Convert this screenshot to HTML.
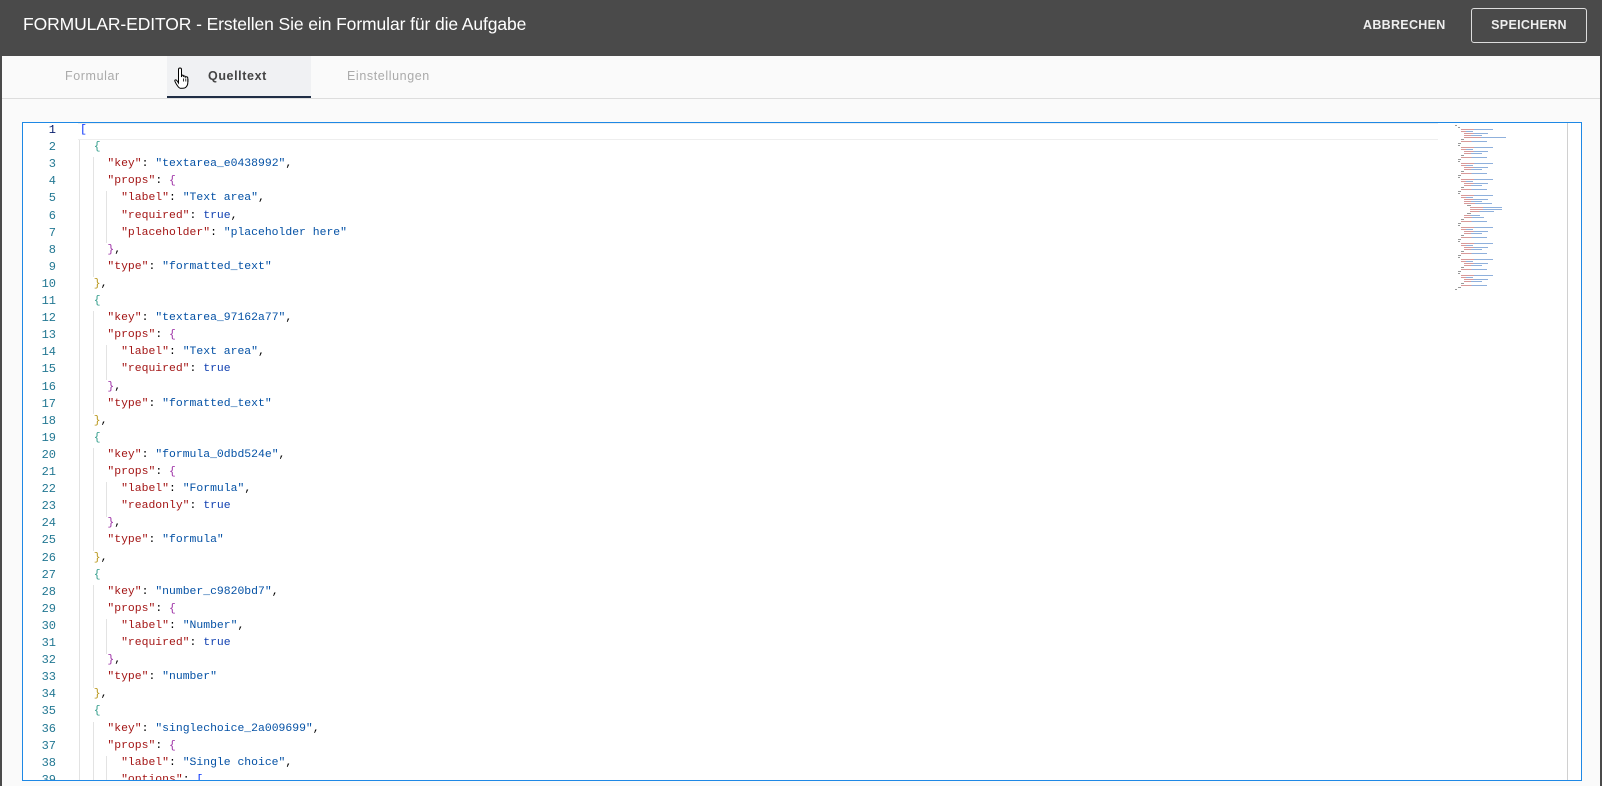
<!DOCTYPE html>
<html><head><meta charset="utf-8"><style>
*{margin:0;padding:0;box-sizing:border-box}
body{width:1602px;height:786px;overflow:hidden;background:#4a4a4a;font-family:"Liberation Sans",sans-serif;position:relative}
#dlg{position:absolute;left:2px;top:0;width:1598px;height:786px;background:#fafafa}
#hdr{position:absolute;left:0;top:0;width:1598px;height:56px;background:#4a4a4a}
#title{position:absolute;left:21px;top:14px;color:#fff;font-size:17.5px;letter-spacing:-.1px}
#abb{position:absolute;left:1361px;top:18px;color:#eee;font-size:12.5px;font-weight:bold;letter-spacing:.3px}
#sp{position:absolute;left:1469px;top:8px;width:116px;height:35px;border:1px solid #ddd;border-radius:3px;color:#eee;font-size:12.5px;font-weight:bold;text-align:center;line-height:33px;letter-spacing:.3px}
#tabs{position:absolute;left:0;top:56px;width:1598px;height:43px;border-bottom:1px solid #ddd;background:#fafafa}
.tab{position:absolute;top:0;height:42px;line-height:40px;font-size:12.5px;color:#aaa;letter-spacing:.6px}
#act{left:165px;width:144px;background:#f0f1f3;border-bottom:2px solid #1f2d44;color:#444;font-weight:bold;padding-left:41px}
#ed{position:absolute;left:20px;top:122px;width:1560px;height:659px;border:1.5px solid #1e88e5;background:#fff;overflow:hidden}
#sb{position:absolute;left:1544px;top:0;width:1px;height:100%;background:#d0d0d0}
#cur{position:absolute;left:55px;top:0;width:1360px;height:17px;border-top:1px solid #eee;border-bottom:1px solid #eee}
.ln{position:absolute;left:0;width:33px;text-align:right;font-family:"Liberation Mono",monospace;font-size:12px;color:#237893}
.cd{position:absolute;left:57px;white-space:pre;font-family:"Liberation Mono",monospace;font-size:11.42px;color:#000}
.k{color:#a31515}.s{color:#0451a5}.t{color:#0f3fb0}.b1{color:#0431fa}.b2{color:#319c8a}.b3{color:#9c2fa5}.b4{color:#b8961a}
.g{position:absolute;width:1px;background:#e3e3e3}
#mm{position:absolute;left:1432px;top:2px;width:70px}
#mm div{height:1px;margin-bottom:1px}
</style></head><body>
<div id="dlg">
<div id="hdr"><div id="title">FORMULAR-EDITOR - Erstellen Sie ein Formular für die Aufgabe</div>
<div id="abb">ABBRECHEN</div><div id="sp">SPEICHERN</div></div>
<div id="tabs">
<div class="tab" style="left:63px">Formular</div>
<div class="tab" id="act">Quelltext</div>
<div class="tab" style="left:345px">Einstellungen</div>
<svg style="position:absolute;left:172px;top:10px" width="20" height="24" viewBox="0 0 20 24"><path d="M6 2c1 0 1.5.6 1.5 1.5V11l.5-2c1 0 1.5.5 1.5 1.2l.3-.3c1 0 1.5.5 1.5 1.2.2-.2.6-.3 1-.3 1 0 1.5.7 1.5 1.5v4.5c0 3-2 5.5-5 5.5H7.5C5 22.8 3.5 20 2 17.5L.9 15.3c-.4-.8.2-1.6 1-1.4.5.1 1 .6 1.6 1.6l1 1.5V3.5C4.5 2.6 5 2 6 2z" fill="#fff" stroke="#000" stroke-width="1"/><path d="M9.5 12.5v3M11.8 12.5v3M14 13v3" stroke="#000" stroke-width=".8"/></svg>
</div>
<div id="ed">
<div id="cur"></div>
<div id="sb"></div>
<div id="code"></div>
<div id="mm"></div>
</div>
</div>
<script>
const L=[
['b1','['],
['','  ',['b2','{']],
['','    ',['k','"key"'],': ',['s','"textarea_e0438992"'],','],
['','    ',['k','"props"'],': ',['b3','{']],
['','      ',['k','"label"'],': ',['s','"Text area"'],','],
['','      ',['k','"required"'],': ',['t','true'],','],
['','      ',['k','"placeholder"'],': ',['s','"placeholder here"']],
['','    ',['b3','}'],','],
['','    ',['k','"type"'],': ',['s','"formatted_text"']],
['','  ',['b4','}'],','],
['','  ',['b2','{']],
['','    ',['k','"key"'],': ',['s','"textarea_97162a77"'],','],
['','    ',['k','"props"'],': ',['b3','{']],
['','      ',['k','"label"'],': ',['s','"Text area"'],','],
['','      ',['k','"required"'],': ',['t','true']],
['','    ',['b3','}'],','],
['','    ',['k','"type"'],': ',['s','"formatted_text"']],
['','  ',['b4','}'],','],
['','  ',['b2','{']],
['','    ',['k','"key"'],': ',['s','"formula_0dbd524e"'],','],
['','    ',['k','"props"'],': ',['b3','{']],
['','      ',['k','"label"'],': ',['s','"Formula"'],','],
['','      ',['k','"readonly"'],': ',['t','true']],
['','    ',['b3','}'],','],
['','    ',['k','"type"'],': ',['s','"formula"']],
['','  ',['b4','}'],','],
['','  ',['b2','{']],
['','    ',['k','"key"'],': ',['s','"number_c9820bd7"'],','],
['','    ',['k','"props"'],': ',['b3','{']],
['','      ',['k','"label"'],': ',['s','"Number"'],','],
['','      ',['k','"required"'],': ',['t','true']],
['','    ',['b3','}'],','],
['','    ',['k','"type"'],': ',['s','"number"']],
['','  ',['b4','}'],','],
['','  ',['b2','{']],
['','    ',['k','"key"'],': ',['s','"singlechoice_2a009699"'],','],
['','    ',['k','"props"'],': ',['b3','{']],
['','      ',['k','"label"'],': ',['s','"Single choice"'],','],
['','      ',['k','"options"'],': ',['b1','[']]
];
const LH=17.1;let h='';
const esc=s=>s.replace(/&/g,'&amp;').replace(/</g,'&lt;');
L.forEach((l,i)=>{
 const y=(i*LH).toFixed(1);
 h+=`<div class="ln" style="top:${y}px;${i==0?'color:#0b216f':''}">${i+1}</div>`;
 let c='';
 if(l[0]){c=`<span class="${l[0]}">${esc(l[1])}</span>`}
 else for(let j=1;j<l.length;j++){const p=l[j];c+=typeof p=='string'?esc(p):`<span class="${p[0]}">${esc(p[1])}</span>`}
 h+=`<div class="cd" style="top:${y}px">${c}</div>`;
 const ind=(typeof l[1]=='string'&&!l[0])?l[1].length:0;
 const lv=Math.floor(ind/2);
 for(let k=0;k<lv;k++){h+=`<div class="g" style="left:${56+k*13.7}px;top:${y}px;height:${LH+0.5}px"></div>`}
});
document.getElementById('code').innerHTML=h;
let m='';const rows=[];rows.push([0,2,0]);
for(let b=0;b<9;b++){rows.push([2,2,0]);rows.push([4,32,1]);rows.push([4,12,1]);rows.push([6,24,1]);rows.push([6,18,1]);if(b==0)rows.push([6,42,1]);if(b==4){rows.push([6,28,1]);rows.push([8,4,0]);rows.push([10,32,1]);rows.push([10,32,1]);rows.push([10,24,1]);rows.push([8,4,0]);rows.push([6,16,1]);rows.push([6,20,1]);}rows.push([4,3,0]);rows.push([4,26,1]);rows.push([2,3,0]);}
rows.push([0,2,0]);
rows.forEach(r=>{m+=`<div style="margin-left:${r[0]*1.5}px;width:${r[1]}px;background:${r[2]?'linear-gradient(90deg,#d89a9a 40%,#8fb0dc 40%)':'#999'}"></div>`});
document.getElementById('mm').innerHTML=m;
</script>
</body></html>
